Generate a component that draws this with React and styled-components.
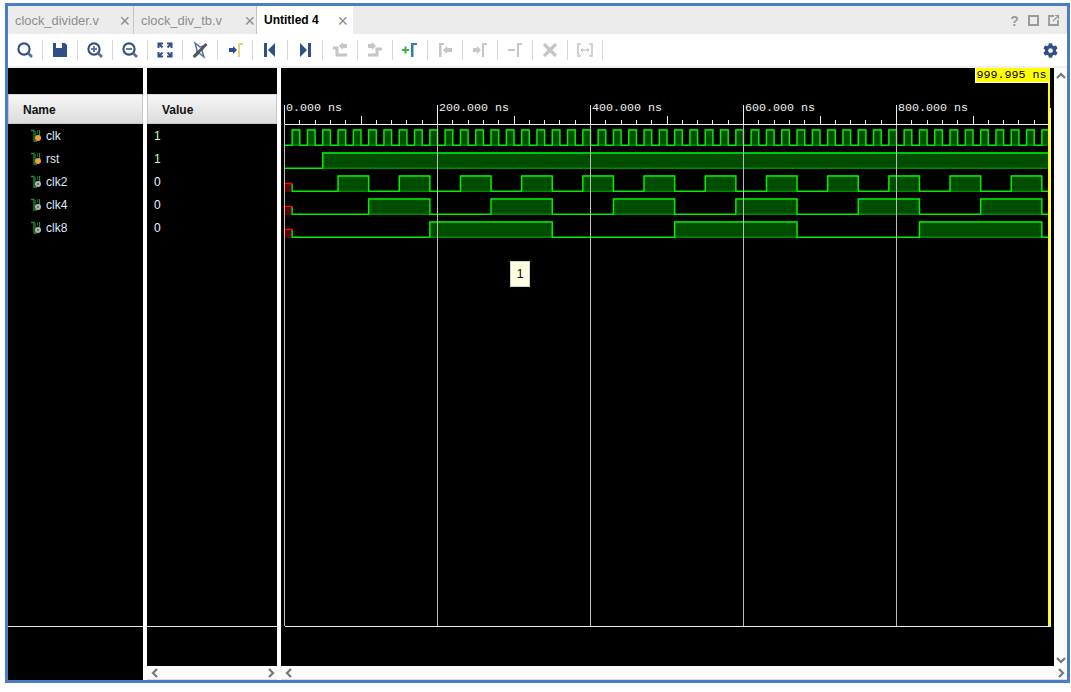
import React from 'react'
import styled, { createGlobalStyle } from 'styled-components'
import { FaCog } from 'react-icons/fa'

const BLUE = '#2f4f86'
const GREY = '#c6c6c6'
const X0 = 284.5
const PX_NS = 0.765

const GlobalStyle = createGlobalStyle`
  html, body { margin: 0; padding: 0; background: #fff; }
  body { font-family: "Liberation Sans", Arial, sans-serif; overflow: hidden; }
`

const Frame = styled.div`
  box-sizing: border-box;
  margin: 3px 0 0 5px;
  width: 1065px;
  height: 680px;
  border: 3px solid #4a7cc7;
  display: flex;
  flex-direction: column;
  background: #fff;
`

const TabBar = styled.div`
  height: 28px;
  display: flex;
  background: #ececec;
  flex-shrink: 0;
`

const Tab = styled.div`
  width: ${(p) => p.$w}px;
  box-sizing: border-box;
  padding: 0 ${(p) => p.$right}px 0 7px;
  display: flex;
  align-items: center;
  justify-content: space-between;
  font-size: ${(p) => (p.$active ? '12px' : '12.9px')};
  font-weight: ${(p) => (p.$active ? 700 : 400)};
  color: ${(p) => (p.$active ? '#000' : '#8c8c8c')};
  background: ${(p) => (p.$active ? '#fff' : 'transparent')};
  border-right: ${(p) => (p.$active ? 'none' : '1px solid #c4c4c4')};
`

const Close = styled.span`
  font-size: 18px;
  font-weight: 400;
  line-height: 1;
  color: #8a8a8a;
  margin-top: 2px;
`

const TabActions = styled.div`
  margin-left: auto;
  display: flex;
  align-items: center;
  gap: 8px;
  padding-right: 7px;
`

const Help = styled.span`
  font-size: 14px;
  font-weight: 700;
  color: #9a9a9a;
  width: 11px;
  text-align: center;
  margin-top: 1px;
`

const Square = styled.span`
  width: 7px;
  height: 7px;
  border: 2px solid #9a9a9a;
`

const Toolbar = styled.div`
  height: 32px;
  display: flex;
  align-items: center;
  background: #fff;
  flex-shrink: 0;
`

const ToolButton = styled.div`
  width: 35px;
  height: 20px;
  box-sizing: border-box;
  border-right: 1px solid #d8d8d8;
  display: flex;
  align-items: center;
  justify-content: center;
`

const GearSlot = styled.div`
  margin-left: auto;
  padding-right: 9px;
  display: flex;
  color: ${BLUE};
`

const Rule = styled.div`
  height: 2px;
  background: #efefef;
  flex-shrink: 0;
`

const Main = styled.div`
  flex: 1;
  min-height: 0;
  display: flex;
  gap: 4px;
  background: #fff;
`

const Column = styled.div`
  width: ${(p) => p.$w}px;
  display: flex;
  flex-direction: column;
  background: #000;
  flex-shrink: 0;
`

const ColumnTop = styled.div`
  height: 26px;
  flex-shrink: 0;
`

const Header = styled.div`
  height: 30px;
  box-sizing: border-box;
  padding: 2px 0 0 14px;
  display: flex;
  align-items: center;
  font-size: 12px;
  font-weight: 700;
  color: #111;
  background: linear-gradient(#f6f6f6, #dcdcdc);
  border: 1px solid #c8c8c8;
  border-top-color: #d8d8d8;
  flex-shrink: 0;
`

const Rows = styled.div`
  height: 503px;
  box-sizing: border-box;
  border-bottom: 1px solid #e8e8e8;
  flex-shrink: 0;
`

const Row = styled.div`
  height: 23px;
  display: flex;
  align-items: center;
  box-sizing: border-box;
  padding-left: ${(p) => p.$pad}px;
  font-size: 12px;
  color: ${(p) => p.$color || '#dcecff'};
`

const SignalIcon = styled.svg`
  width: 14px;
  height: 14px;
  margin-right: 2px;
  flex-shrink: 0;
`

const ColumnRest = styled.div`
  flex: 1;
`

const HScroll = styled.div`
  height: 14px;
  box-sizing: border-box;
  background: #fbfbfb;
  border-bottom: 1px solid #dcdcdc;
  display: flex;
  align-items: center;
  justify-content: space-between;
  padding: 0 1px 0 3px;
  flex-shrink: 0;
`

const WaveSide = styled.div`
  flex: 1;
  display: flex;
  flex-direction: column;
  min-width: 0;
`

const WaveTop = styled.div`
  flex: 1;
  min-height: 0;
  display: flex;
`

const WavePanel = styled.div`
  position: relative;
  width: 773px;
  background: #000;
  flex-shrink: 0;
`

const WaveSvg = styled.svg`
  display: block;
`

const ValueTip = styled.div`
  position: absolute;
  left: 229px;
  top: 193px;
  width: 20px;
  height: 26px;
  box-sizing: border-box;
  display: flex;
  align-items: center;
  justify-content: center;
  background: #ffffe1;
  border: 1px solid #cfcfcf;
  font-size: 12px;
  color: #000;
`

const VScroll = styled.div`
  flex: 1;
  background: #fbfbfb;
  display: flex;
  flex-direction: column;
  align-items: center;
  justify-content: space-between;
  padding: 3px 0 0;
`

const Ico = ({ children }) => (
  <svg width="20" height="20" viewBox="0 0 20 20">{children}</svg>
)

const Chevron = ({ dir }) => {
  const pts = {
    left: '7,2 3,6 7,10',
    right: '5,2 9,6 5,10',
    up: '2,7 6,3 10,7',
    down: '2,4 6,8 10,4',
  }[dir]
  return (
    <svg width="12" height="12" viewBox="0 0 12 12">
      <polyline points={pts} fill="none" stroke="#777" strokeWidth="2.2" />
    </svg>
  )
}

const Lens = ({ sign }) => (
  <Ico>
    <circle cx="9" cy="9" r="5.6" fill="none" stroke={BLUE} strokeWidth="2.1" />
    <line x1="13" y1="13" x2="17" y2="17" stroke="#5a6f94" strokeWidth="2.6" />
    {sign && <line x1="6" y1="9" x2="12" y2="9" stroke="#5a6f94" strokeWidth="1.8" />}
    {sign === '+' && <line x1="9" y1="6" x2="9" y2="12" stroke="#5a6f94" strokeWidth="1.8" />}
  </Ico>
)

const tools = [
  <Lens />,
  <Ico>
    <path d="M3 3h3v5h6V3h3l2 2v12H3z" fill={BLUE} />
  </Ico>,
  <Lens sign="+" />,
  <Lens sign="-" />,
  <Ico>
    <path
      d="M3.5 8V3.5H8M3.5 3.5l4 4M16.5 8V3.5H12M16.5 3.5l-4 4M3.5 12v4.5H8M3.5 16.5l4-4M16.5 12v4.5H12M16.5 16.5l-4-4"
      fill="none"
      stroke={BLUE}
      strokeWidth="2"
    />
  </Ico>,
  <Ico>
    <path d="M5 3l5 4 4-1-2 5 2 6-5-4-3 3 1-6z" fill="none" stroke="#4a6aa5" strokeWidth="1.4" />
    <line x1="3.5" y1="17" x2="16.5" y2="4" stroke="#555" strokeWidth="2.8" />
  </Ico>,
  <Ico>
    <path d="M4 8h4V6l4 4-4 4v-2H4z" fill={BLUE} />
    <path d="M13 17V3h5v2h-3v12z" fill="#e8d27f" />
  </Ico>,
  <Ico>
    <rect x="4" y="3" width="3" height="14" fill={BLUE} />
    <path d="M15 3v14l-7-7z" fill={BLUE} />
  </Ico>,
  <Ico>
    <rect x="13" y="3" width="3" height="14" fill={BLUE} />
    <path d="M5 3v14l7-7z" fill={BLUE} />
  </Ico>,
  <Ico>
    <polyline points="3,8 7,8 7,15 17,15" fill="none" stroke={GREY} strokeWidth="3" />
    <path d="M17 4h-4V2L9 6l4 4V8h4z" fill={GREY} />
  </Ico>,
  <Ico>
    <polyline points="3,15 12,15 12,9 17,9" fill="none" stroke={GREY} strokeWidth="3" />
    <path d="M3 4h4V2l4 4-4 4V8H3z" fill={GREY} />
  </Ico>,
  <Ico>
    <path d="M2 9h2.5V6.5h2V9H9v2H6.5v2.5h-2V11H2z" fill="#3cb043" />
    <path d="M11 17V3h6v2h-3.5v12z" fill="#2f7fb5" />
  </Ico>,
  <Ico>
    <path d="M4 17V3h5v2H6.5v12z" fill={GREY} />
    <path d="M17 8h-5V6l-4 4 4 4v-2h5z" fill={GREY} />
  </Ico>,
  <Ico>
    <path d="M3 8h4V6l4 4-4 4v-2H3z" fill={GREY} />
    <path d="M12 17V3h5v2h-3v12z" fill={GREY} />
  </Ico>,
  <Ico>
    <rect x="3" y="9" width="7" height="2" fill={GREY} />
    <path d="M12 17V3h5v2h-3v12z" fill={GREY} />
  </Ico>,
  <Ico>
    <path d="M4 4l12 12M16 4L4 16" stroke={GREY} strokeWidth="3.2" fill="none" />
  </Ico>,
  <Ico>
    <path d="M6 4H3v12h3M14 4h3v12h-3" fill="none" stroke={GREY} strokeWidth="1.6" />
    <path d="M6 10h8M7.5 8.5L6 10l1.5 1.5M12.5 8.5L14 10l-1.5 1.5" fill="none" stroke="#b0b0b0" strokeWidth="1" />
  </Ico>,
]

const x = (t) => X0 + t * PX_NS

// rising/falling times of each signal, in ns
const edges = (first, period, end = 1000) => {
  const out = []
  for (let t = first; t < end; t += period / 2) out.push(t)
  return out
}

const signals = [
  { name: 'clk', value: '1', color: 'orange', y: 146, edges: edges(10, 20) },
  { name: 'rst', value: '1', color: 'orange', y: 169, edges: [50] },
  { name: 'clk2', value: '0', color: 'grey', y: 192, unknown: true, edges: edges(70, 80) },
  { name: 'clk4', value: '0', color: 'grey', y: 215, unknown: true, edges: edges(110, 160) },
  { name: 'clk8', value: '0', color: 'grey', y: 238, unknown: true, edges: edges(190, 320) },
]

const END = 1048

const Wave = ({ sig }) => {
  const { y, edges: e, unknown } = sig
  const top = y - 17
  const start = unknown ? x(10) : X0
  const highs = []
  for (let i = 0; i < e.length; i += 2) {
    highs.push([x(e[i]), i + 1 < e.length ? x(e[i + 1]) : END])
  }
  const low = y - 0.7
  const high = top + 0.9
  let line = `${start},${low}`
  e.forEach((t, i) => {
    const from = i % 2 === 0 ? low : high
    const to = i % 2 === 0 ? high : low
    line += ` ${x(t)},${from} ${x(t)},${to}`
  })
  line += ` ${END},${e.length % 2 ? high : low}`
  return (
    <g>
      {highs.map(([a, b]) => (
        <rect key={a} x={a} y={top} width={b - a} height={17} fill="#004d00" />
      ))}
      {unknown && (
        <g>
          <rect x={X0} y={y - 9} width={7.5} height={9} fill="#5a0000" />
          <line x1={X0} y1={y - 8.6} x2={x(10) + 0.5} y2={y - 8.6} stroke="#ff0000" strokeWidth="1.4" />
          <line x1={x(10)} y1={y - 8} x2={x(10)} y2={y} stroke="#00e800" strokeWidth="1.4" />
        </g>
      )}
      <polyline points={line} fill="none" stroke="#00ee00" strokeWidth="1.5" />
      {highs.map(([a, b]) => (
        <line key={a} x1={a + 1} y1={y - 0.7} x2={b - 1} y2={y - 0.7} stroke="#008a00" strokeWidth="1.4" />
      ))}
    </g>
  )
}

const ticks = []
for (let t = 0; t <= 990; t += 20) ticks.push(t)

const WaveView = () => (
  <WaveSvg width="773" height="598" viewBox="281 68 773 598">
    {ticks.map((t) => (
      <line
        key={t}
        x1={x(t)}
        x2={x(t)}
        y1={t % 100 === 0 ? 116 : 120}
        y2={124}
        stroke="#eee"
        shapeRendering="crispEdges"
      />
    ))}
    {signals.map((s) => <Wave key={s.name} sig={s} />)}
    {[0, 200, 400, 600, 800].map((t) => (
      <g key={t} shapeRendering="crispEdges">
        <line x1={x(t)} x2={x(t)} y1={105} y2={124} stroke="#eee" />
        <line x1={x(t)} x2={x(t)} y1={124} y2={626} stroke="#bdbdbd" />
        <text x={x(t) + 1.5} y={111} fontFamily='"Liberation Mono", monospace' fontSize="11.67" fill="#f0f0f0">
          {t}.000 ns
        </text>
      </g>
    ))}
    <g shapeRendering="crispEdges">
      <line x1={X0} x2={1051} y1={124.5} y2={124.5} stroke="#eee" />
      <line x1={X0} x2={1051} y1={626.5} y2={626.5} stroke="#eee" />
      <line x1={1050.5} x2={1050.5} y1={108} y2={627} stroke="#eee" />
      <rect x={1048} y={68} width={2} height={558} fill="#ffff00" />
      <rect x={975} y={68} width={75} height={15} fill="#fff" />
      <rect x={976} y={68} width={74} height={14} fill="#ffff00" />
    </g>
    <text x={976.5} y={78} fontFamily='"Liberation Mono", monospace' fontSize="11.67" fill="#000">
      999.995 ns
    </text>
  </WaveSvg>
)

const RowIcon = ({ color }) => (
  <SignalIcon viewBox="0 0 14 14">
    <path d="M1 1.5h3V12h3" fill="none" stroke="#1f8f3a" strokeWidth="1.3" />
    <path d="M9.5 1v6" fill="none" stroke="#1f8f3a" strokeWidth="1.3" />
    <path d="M5.5 2v6M7.5 1v4" fill="none" stroke="#0f5a22" strokeWidth="1" />
    <circle cx="8" cy="9" r="3" fill={color === 'orange' ? '#f0a030' : '#b4b4b4'} />
    {color !== 'orange' && <circle cx="8" cy="9" r="1" fill="#555" />}
  </SignalIcon>
)

export default function App() {
  return (
    <>
      <GlobalStyle />
      <Frame>
        <TabBar>
          <Tab $w={126} $right={3}>clock_divider.v<Close>×</Close></Tab>
          <Tab $w={123} $right={1}>clock_div_tb.v<Close>×</Close></Tab>
          <Tab $w={96} $right={5} $active>Untitled 4<Close>×</Close></Tab>
          <TabActions>
            <Help>?</Help>
            <Square />
            <svg width="13" height="13" viewBox="0 0 13 13">
              <path d="M7 2H2v9h9V6" fill="none" stroke="#9a9a9a" strokeWidth="1.8" />
              <path d="M6 7l5-5M8 1.5h3.5V5" fill="none" stroke="#9a9a9a" strokeWidth="1.2" />
            </svg>
          </TabActions>
        </TabBar>
        <Toolbar>
          {tools.map((icon, i) => <ToolButton key={i}>{icon}</ToolButton>)}
          <GearSlot><FaCog size={15} /></GearSlot>
        </Toolbar>
        <Rule />
        <Main>
          <Column $w={135}>
            <ColumnTop />
            <Header>Name</Header>
            <Rows>
              {signals.map((s) => (
                <Row key={s.name} $pad={22}>
                  <RowIcon color={s.color} />
                  {s.name}
                </Row>
              ))}
            </Rows>
            <ColumnRest />
          </Column>
          <Column $w={130}>
            <ColumnTop />
            <Header>Value</Header>
            <Rows>
              {signals.map((s) => (
                <Row key={s.name} $pad={7} $color={s.value === '1' ? '#c8ffc8' : '#f0f6ff'}>
                  {s.value}
                </Row>
              ))}
            </Rows>
            <ColumnRest />
            <HScroll>
              <Chevron dir="left" />
              <Chevron dir="right" />
            </HScroll>
          </Column>
          <WaveSide>
            <WaveTop>
              <WavePanel>
                <WaveView />
                <ValueTip>1</ValueTip>
              </WavePanel>
              <VScroll>
                <Chevron dir="up" />
                <Chevron dir="down" />
              </VScroll>
            </WaveTop>
            <HScroll>
              <Chevron dir="left" />
              <Chevron dir="right" />
            </HScroll>
          </WaveSide>
        </Main>
      </Frame>
    </>
  )
}
